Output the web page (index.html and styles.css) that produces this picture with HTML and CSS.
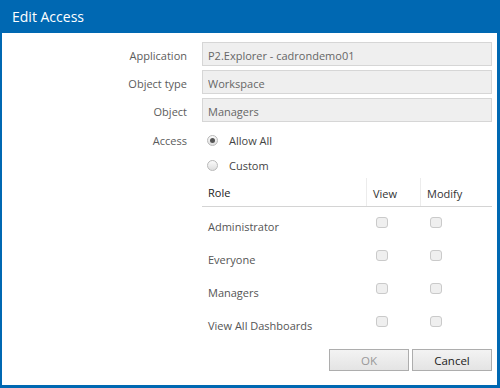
FILE: index.html
```html
<!DOCTYPE html>
<html lang="en">
<head>
  <meta charset="UTF-8">
  <meta name="viewport" content="width=device-width, initial-scale=1.0">
  <title>Edit Access</title>
  <link rel="stylesheet" href="styles.css">
</head>
<body>
  <div class="dialog">
    <div class="dialog-title">Edit Access</div>

    <div class="dialog-body">
      <div class="form-grid">
        <label class="field-label">Application</label>
        <input class="field-input" type="text" value="P2.Explorer - cadrondemo01" readonly>

        <label class="field-label">Object type</label>
        <input class="field-input" type="text" value="Workspace" readonly>

        <label class="field-label">Object</label>
        <input class="field-input" type="text" value="Managers" readonly>

        <span class="field-label access-label">Access</span>
        <div class="access-options">
          <label class="radio-line">
            <input type="radio" name="access" checked>
            Allow All
          </label>
          <label class="radio-line">
            <input type="radio" name="access">
            Custom
          </label>

          <div class="role-table">
            <div class="role-head">
              <div class="role-cell">Role</div>
              <div class="role-cell sep">View</div>
              <div class="role-cell sep">Modify</div>
            </div>
            <div class="role-row">
              <div class="role-cell">Administrator</div>
              <div class="role-cell check"><input type="checkbox" disabled></div>
              <div class="role-cell check"><input type="checkbox" disabled></div>
            </div>
            <div class="role-row">
              <div class="role-cell">Everyone</div>
              <div class="role-cell check"><input type="checkbox" disabled></div>
              <div class="role-cell check"><input type="checkbox" disabled></div>
            </div>
            <div class="role-row">
              <div class="role-cell">Managers</div>
              <div class="role-cell check"><input type="checkbox" disabled></div>
              <div class="role-cell check"><input type="checkbox" disabled></div>
            </div>
            <div class="role-row">
              <div class="role-cell">View All Dashboards</div>
              <div class="role-cell check"><input type="checkbox" disabled></div>
              <div class="role-cell check"><input type="checkbox" disabled></div>
            </div>
          </div>
        </div>
      </div>

      <div class="dialog-buttons">
        <button class="btn" disabled>OK</button>
        <button class="btn">Cancel</button>
      </div>
    </div>
  </div>
</body>
</html>
```

FILE: styles.css
```css
* {
  box-sizing: border-box;
}

body {
  margin: 0;
  font-family: "Open Sans", "Noto Sans", sans-serif;
  font-size: 11px;
  color: #555;
}

.dialog {
  width: 500px;
  height: 388px;
  background: #fff;
  border: solid #0068b2;
  border-width: 0 3px 3px 2px;
}

.dialog-title {
  height: 33px;
  margin-left: -2px;
  margin-right: -3px;
  padding: 1px 12px 0;
  background: #0068b2;
  color: #fff;
  font-size: 14px;
  line-height: 32px;
}

.dialog-body {
  padding: 9px 5px 0 0;
}

.form-grid {
  display: grid;
  grid-template-columns: 185px 290px;
  column-gap: 15px;
  row-gap: 4px;
}

.field-label {
  text-align: right;
  padding-top: 4px;
  line-height: 20px;
  color: #5c5c5c;
}

.access-label {
  padding-top: 5px;
}

.field-input {
  height: 24px;
  margin: 0;
  padding: 2px 5px 0;
  border: 1px solid #d6d6d6;
  background: #efefef;
  color: #666;
  font: inherit;
  outline: none;
}

.access-options {
  padding-top: 1px;
}

.radio-line {
  display: flex;
  align-items: center;
  height: 25px;
  padding-left: 5px;
  color: #444;
}

.radio-line input {
  appearance: none;
  width: 11px;
  height: 11px;
  margin: 0 11px 0 0;
  border: 1px solid #b9b9b9;
  border-radius: 50%;
  background: linear-gradient(#fbfbfb, #dedede);
  display: grid;
  place-items: center;
}

.radio-line input:checked::after {
  content: "";
  width: 5px;
  height: 5px;
  border-radius: 50%;
  background: #555;
}

.radio-line {
  padding-top: 1px;
}

.role-table {
  width: 290px;
}

.role-head,
.role-row {
  display: grid;
  grid-template-columns: 164px 54px 72px;
}

.role-head {
  height: 30px;
  border-bottom: 1px solid #d4d4d4;
  color: #333;
}

.role-head .role-cell {
  display: flex;
  align-items: center;
  padding: 2px 7px 0 6px;
}

.role-head .sep {
  border-left: 1px solid #ececec;
  margin-top: 1px;
}

.role-head .role-cell:first-child {
  color: #222;
}

.role-head + .role-row {
  margin-top: 2px;
}

.role-row {
  height: 33px;
}

.role-row .role-cell {
  display: flex;
  align-items: center;
  padding: 2px 0 0 6px;
}

.role-row .check {
  padding-left: 10px;
}

.check input {
  appearance: none;
  width: 12px;
  height: 11px;
  margin: 0 0 8px 0;
  border: 1px solid #cacaca;
  border-radius: 3px;
  background: #efefef;
}

.dialog-buttons {
  display: flex;
  justify-content: flex-end;
  gap: 3px;
  margin-top: 8px;
}

.btn {
  width: 80px;
  height: 22px;
  margin: 0;
  border: 1px solid #adadad;
  background: linear-gradient(#f3f3f3, #e4e4e4);
  color: #222;
  font: inherit;
  font-size: 11.5px;
}

.btn:disabled {
  color: #999;
}
```
